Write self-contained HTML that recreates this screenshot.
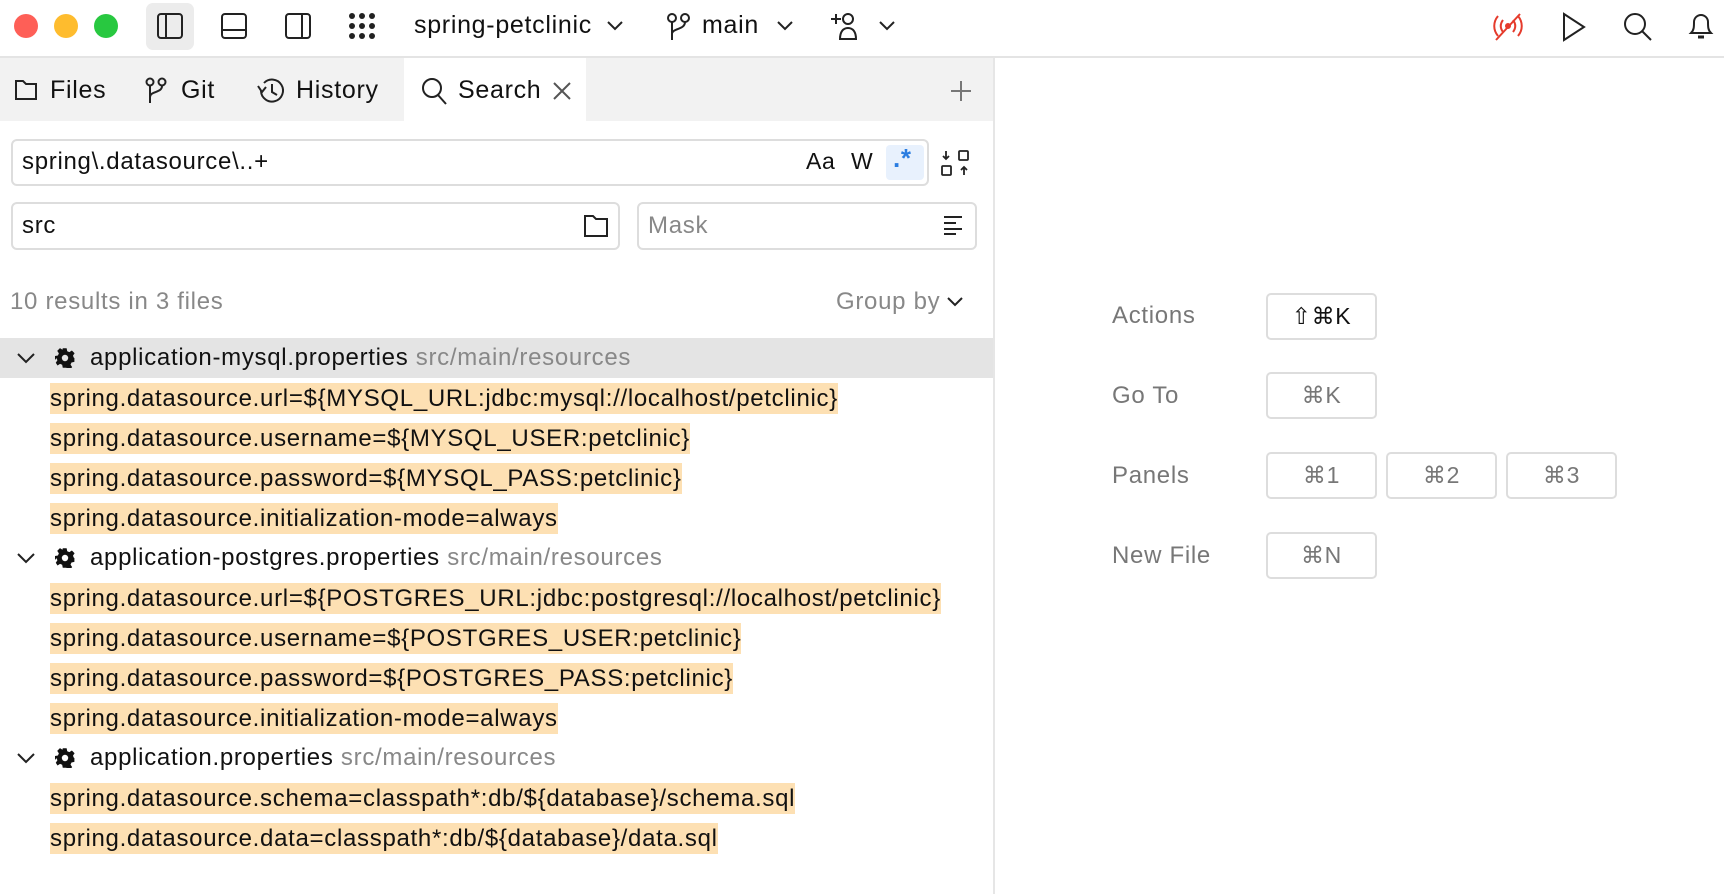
<!DOCTYPE html>
<html><head><meta charset="utf-8"><style>
*{box-sizing:border-box;margin:0;padding:0}
body{width:1724px;height:894px;background:#fff;font-family:"Liberation Sans",sans-serif;color:#111;position:relative;overflow:hidden;letter-spacing:.7px}
.a{position:absolute}
.dot{position:absolute;top:14px;width:24px;height:24px;border-radius:50%}
.t{position:absolute;white-space:nowrap}
.row{position:absolute;left:0;width:994px;height:40px;font-size:24px;line-height:40px}
.hl{position:absolute;left:50px;top:5px;height:31px;line-height:31px;background:#fde0b3;white-space:nowrap}
.key{position:absolute;width:111px;height:47px;border:2px solid #ddd;border-radius:5px;font-size:23px;line-height:43px;text-align:center;color:#777}
.lbl{position:absolute;left:1112px;font-size:24px;color:#777}
svg{position:absolute;fill:none;stroke:#222;stroke-width:2}
</style></head><body>
<div class="dot" style="left:14px;background:#fe5f57"></div>
<div class="dot" style="left:54px;background:#febc2e"></div>
<div class="dot" style="left:94px;background:#28c840"></div>
<div class="a" style="left:146px;top:3px;width:48px;height:47px;background:#ececec;border-radius:7px"></div>
<svg style="left:156px;top:12px" width="28" height="28"><rect x="2" y="2" width="24" height="24" rx="3"/><line x1="10" y1="2" x2="10" y2="26"/></svg>
<svg style="left:220px;top:12px" width="28" height="28"><rect x="2" y="2" width="24" height="24" rx="3"/><line x1="2" y1="18" x2="26" y2="18"/></svg>
<svg style="left:284px;top:12px" width="28" height="28"><rect x="2" y="2" width="24" height="24" rx="3"/><line x1="18" y1="2" x2="18" y2="26"/></svg>
<svg style="left:348px;top:12px;fill:#222;stroke:none" width="28" height="28"><circle cx="4" cy="4" r="3"/><circle cx="14" cy="4" r="3"/><circle cx="24" cy="4" r="3"/><circle cx="4" cy="14" r="3"/><circle cx="14" cy="14" r="3"/><circle cx="24" cy="14" r="3"/><circle cx="4" cy="24" r="3"/><circle cx="14" cy="24" r="3"/><circle cx="24" cy="24" r="3"/></svg>
<div class="t" style="left:414px;top:11px;font-size:25px">spring-petclinic</div>
<svg style="left:606px;top:20px" width="18" height="12"><path d="M2 2l7 7 7-7"/></svg>
<svg style="left:666px;top:12px" width="26" height="30"><circle cx="6" cy="6" r="4"/><circle cx="19" cy="6" r="4"/><path d="M6 10v18M19 10c0 8-13 6-13 12"/></svg>
<div class="t" style="left:702px;top:11px;font-size:25px">main</div>
<svg style="left:776px;top:20px" width="18" height="12"><path d="M2 2l7 7 7-7"/></svg>
<svg style="left:830px;top:11px" width="34" height="30"><path d="M1 8h10M6 3v10"/><circle cx="18" cy="8" r="5"/><path d="M10 28c0-7 3-11 8-11s8 4 8 11z"/></svg>
<svg style="left:878px;top:20px" width="18" height="12"><path d="M2 2l7 7 7-7"/></svg>
<svg style="left:1490px;top:12px;stroke:#e53b2c" width="36" height="30"><path d="M8 4c-5 6-5 14 0 20M28 4c5 6 5 14 0 20M13 8c-3 4-3 8 0 12M23 8c3 4 3 8 0 12M30 2L6 28"/><circle cx="18" cy="14" r="2" fill="#e53b2c"/></svg>
<svg style="left:1560px;top:11px" width="28" height="32"><path d="M4 3l20 13-20 13z"/></svg>
<svg style="left:1622px;top:11px" width="32" height="32"><circle cx="13" cy="13" r="10"/><path d="M20 20l9 9"/></svg>
<svg style="left:1686px;top:9px" width="30" height="34"><path d="M5 24c3-3 3-6 3-11a7 7 0 0114 0c0 5 0 8 3 11z"/><path d="M12 28h6" stroke-width="3"/></svg>
<div class="a" style="left:0;top:56px;width:1724px;height:2px;background:#e4e4e4"></div>
<div class="a" style="left:0;top:58px;width:994px;height:63px;background:#f2f2f2"></div>
<div class="a" style="left:404px;top:58px;width:182px;height:63px;background:#fff"></div>
<div class="a" style="left:993px;top:58px;width:2px;height:836px;background:#e6e6e6"></div>
<svg style="left:14px;top:79px" width="24" height="22"><path d="M2 2h7l3 3h10v15H2z"/></svg>
<div class="t" style="left:50px;top:76px;font-size:25px">Files</div>
<svg style="left:145px;top:77px" width="24" height="28"><circle cx="5" cy="5" r="3.5"/><circle cx="17" cy="5" r="3.5"/><path d="M5 9v17M17 9c0 7-12 5-12 11"/></svg>
<div class="t" style="left:181px;top:76px;font-size:25px">Git</div>
<svg style="left:256px;top:77px" width="30" height="28"><path d="M5 14a11 11 0 1 0 3-8"/><path d="M2 9l4 6 4-5"/><path d="M16 7v8l5 3"/></svg>
<div class="t" style="left:296px;top:76px;font-size:25px">History</div>
<svg style="left:420px;top:77px" width="28" height="28"><circle cx="12" cy="11" r="9"/><path d="M18 18l8 9"/></svg>
<div class="t" style="left:458px;top:76px;font-size:25px">Search</div>
<svg style="left:552px;top:81px" width="20" height="20"><path d="M2 2l16 16M18 2L2 18" stroke="#555"/></svg>
<svg style="left:950px;top:80px" width="22" height="22"><path d="M11 1v20M1 11h20" stroke="#777"/></svg>
<div class="a" style="left:11px;top:139px;width:918px;height:47px;border:2px solid #ddd;border-radius:6px"></div>
<div class="t" style="left:22px;top:148px;font-size:24px">spring\.datasource\..+</div>
<div class="t" style="left:806px;top:148px;font-size:23px">Aa</div>
<div class="t" style="left:851px;top:148px;font-size:23px">W</div>
<div class="a" style="left:886px;top:145px;width:38px;height:35px;background:#e8f1fd;border-radius:4px"></div>
<div class="t" style="left:893px;top:143px;font-size:26px;color:#2a7de1;font-weight:bold">.*</div>
<svg style="left:940px;top:149px;stroke-width:1.8" width="34" height="28"><rect x="19" y="2" width="9" height="9" rx="1"/><rect x="2" y="17" width="9" height="9" rx="1"/><path d="M6 2v8M3 7l3 3 3-3M24 26v-8M21 21l3-3 3 3"/></svg>
<div class="a" style="left:11px;top:202px;width:609px;height:48px;border:2px solid #ddd;border-radius:6px"></div>
<div class="t" style="left:22px;top:212px;font-size:24px">src</div>
<svg style="left:583px;top:214px" width="26" height="24"><path d="M2 2h8l3 3h11v17H2z"/></svg>
<div class="a" style="left:637px;top:202px;width:340px;height:48px;border:2px solid #ddd;border-radius:6px"></div>
<div class="t" style="left:648px;top:212px;font-size:24px;color:#888">Mask</div>
<svg style="left:942px;top:214px" width="22" height="22"><path d="M2 3h18M2 9h12M2 15h18M2 20h12"/></svg>
<div class="t" style="left:10px;top:288px;font-size:24px;color:#888">10 results in 3 files</div>
<div class="t" style="left:836px;top:288px;font-size:24px;color:#888">Group by</div>
<svg style="left:946px;top:295px" width="18" height="14"><path d="M2 3l7 7 7-7"/></svg>
<div class="a" style="left:0;top:338px;width:993px;height:40px;background:#e4e4e4"></div>
<div class="row" style="top:338px">
<svg style="left:16px;top:14px" width="20" height="14"><path d="M2 2l8 8 8-8"/></svg>
<svg style="left:55px;top:10px;fill:#111;stroke:none" width="20" height="20" viewBox="0 0 20 20"><path d="M8 0h4l.6 3 2.2 1 2.6-1.7 2.8 2.8L18.5 7.7l1 2.2 .5.1v4l-3 .6-1 2.2 1.7 2.6-2.8 2.8-2.6-1.7-2.2 1L12 20H8l-.6-3-2.2-1-2.6 1.7L.8 14.9l1.7-2.6-1-2.2L0 12V8l3-.6 1-2.2L2.3 2.6 5.1-.2 7.7 1.5z" transform="translate(0 .3) scale(.97)"/><circle cx="10" cy="10" r="3.2" fill="#e4e4e4"/></svg>
<span class="t" style="left:90px">application-mysql.properties <span style="color:#888">src/main/resources</span></span></div>
<div class="row" style="top:378px"><span class="hl">spring.datasource.url=${MYSQL_URL:jdbc:mysql://localhost/petclinic}</span></div>
<div class="row" style="top:418px"><span class="hl">spring.datasource.username=${MYSQL_USER:petclinic}</span></div>
<div class="row" style="top:458px"><span class="hl">spring.datasource.password=${MYSQL_PASS:petclinic}</span></div>
<div class="row" style="top:498px"><span class="hl">spring.datasource.initialization-mode=always</span></div>
<div class="row" style="top:538px">
<svg style="left:16px;top:14px" width="20" height="14"><path d="M2 2l8 8 8-8"/></svg>
<svg style="left:55px;top:10px;fill:#111;stroke:none" width="20" height="20" viewBox="0 0 20 20"><path d="M8 0h4l.6 3 2.2 1 2.6-1.7 2.8 2.8L18.5 7.7l1 2.2 .5.1v4l-3 .6-1 2.2 1.7 2.6-2.8 2.8-2.6-1.7-2.2 1L12 20H8l-.6-3-2.2-1-2.6 1.7L.8 14.9l1.7-2.6-1-2.2L0 12V8l3-.6 1-2.2L2.3 2.6 5.1-.2 7.7 1.5z" transform="translate(0 .3) scale(.97)"/><circle cx="10" cy="10" r="3.2" fill="#fff"/></svg>
<span class="t" style="left:90px">application-postgres.properties <span style="color:#888">src/main/resources</span></span></div>
<div class="row" style="top:578px"><span class="hl">spring.datasource.url=${POSTGRES_URL:jdbc:postgresql://localhost/petclinic}</span></div>
<div class="row" style="top:618px"><span class="hl">spring.datasource.username=${POSTGRES_USER:petclinic}</span></div>
<div class="row" style="top:658px"><span class="hl">spring.datasource.password=${POSTGRES_PASS:petclinic}</span></div>
<div class="row" style="top:698px"><span class="hl">spring.datasource.initialization-mode=always</span></div>
<div class="row" style="top:738px">
<svg style="left:16px;top:14px" width="20" height="14"><path d="M2 2l8 8 8-8"/></svg>
<svg style="left:55px;top:10px;fill:#111;stroke:none" width="20" height="20" viewBox="0 0 20 20"><path d="M8 0h4l.6 3 2.2 1 2.6-1.7 2.8 2.8L18.5 7.7l1 2.2 .5.1v4l-3 .6-1 2.2 1.7 2.6-2.8 2.8-2.6-1.7-2.2 1L12 20H8l-.6-3-2.2-1-2.6 1.7L.8 14.9l1.7-2.6-1-2.2L0 12V8l3-.6 1-2.2L2.3 2.6 5.1-.2 7.7 1.5z" transform="translate(0 .3) scale(.97)"/><circle cx="10" cy="10" r="3.2" fill="#fff"/></svg>
<span class="t" style="left:90px">application.properties <span style="color:#888">src/main/resources</span></span></div>
<div class="row" style="top:778px"><span class="hl">spring.datasource.schema=classpath*:db/${database}/schema.sql</span></div>
<div class="row" style="top:818px"><span class="hl">spring.datasource.data=classpath*:db/${database}/data.sql</span></div>
<div class="lbl" style="top:302px">Actions</div>
<div class="key" style="left:1266px;top:293px;color:#111">⇧⌘K</div>
<div class="lbl" style="top:382px">Go To</div>
<div class="key" style="left:1266px;top:372px">⌘K</div>
<div class="lbl" style="top:462px">Panels</div>
<div class="key" style="left:1266px;top:452px">⌘1</div>
<div class="key" style="left:1386px;top:452px">⌘2</div>
<div class="key" style="left:1506px;top:452px">⌘3</div>
<div class="lbl" style="top:542px">New File</div>
<div class="key" style="left:1266px;top:532px">⌘N</div>
</body></html>
